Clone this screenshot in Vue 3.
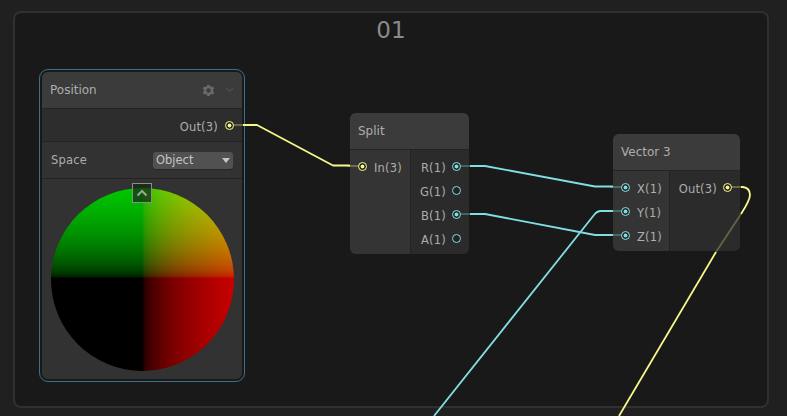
<script setup>
const gamma = (t) => Math.round(200 * Math.pow(t, 1 / 2.2))
const ts = [0, 0.02, 0.05, 0.1, 0.2, 0.35, 0.5, 0.7, 0.85, 1]
const redStops = ts.map((t) => `rgb(${gamma(t)},0,0) ${49.8 + t * 50.2}%`).join(',')
const greenStops = ts.slice().reverse().map((t) => `rgb(0,${gamma(t)},0) ${(1 - t) * 49.3}%`).join(',')
const sphereStyle = {
  backgroundImage: `linear-gradient(to right,#000 49.8%,${redStops}),linear-gradient(to bottom,${greenStops},#000 49.3%)`
}
</script>

<template>
  <div class="canvas">
    <div class="group">
      <div class="group-title">01</div>
    </div>

    <section class="node selected pos-node">
      <header class="node-head">
        <span>Position</span>
        <span class="head-tools">
          <svg width="13" height="13" viewBox="0 0 13 13">
            <path fill="#6a6a6a" fill-rule="evenodd" d="M5.200 1h2.600l.4 1.500 1.300.6 1.400-.7 1.300 2.200-1.100 1.100v1.600l1.100 1.100-1.300 2.200-1.400-.7-1.300.6-.4 1.500H5.200l-.4-1.500-1.300-.6-1.400.7L.8 8.400l1.100-1.100V5.700L.8 4.600l1.300-2.200 1.400.7 1.300-.6zM6.500 4.300a2.200 2.200 0 1 0 0 4.400 2.200 2.200 0 0 0 0-4.400z" />
          </svg>
          <svg width="9" height="6" viewBox="0 0 9 6" fill="none">
            <path d="M1 1l3.500 3.500L8 1" stroke="#4f4f4f" stroke-width="1.200" />
          </svg>
        </span>
      </header>
      <div class="out-row">
        <span class="lbl">Out(3)</span>
        <span class="port yellow filled"><i class="stub right" /></span>
      </div>
      <div class="space-row">
        <span class="lbl">Space</span>
        <div class="select"><span>Object</span><i class="caret" /></div>
      </div>
      <div class="preview">
        <div class="sphere" :style="sphereStyle"></div>
        <div class="collapse">
          <svg width="12" height="8" viewBox="0 0 12 8" fill="none">
            <path d="M1.500 6.500L6 2l4.500 4.500" stroke="#9aa89a" stroke-width="2" />
          </svg>
        </div>
      </div>
    </section>

    <section class="node split-node">
      <header class="node-head"><span>Split</span></header>
      <div class="slots">
        <div class="col inputs">
          <div class="slot in-slot">
            <span class="port yellow filled"><i class="stub left" /></span>
            <span class="lbl">In(3)</span>
          </div>
        </div>
        <div class="col outputs">
          <div class="slot out-slot"><span class="lbl">R(1)</span><span class="port cyan filled"><i class="stub right" /></span></div>
          <div class="slot out-slot"><span class="lbl">G(1)</span><span class="port cyan"></span></div>
          <div class="slot out-slot"><span class="lbl">B(1)</span><span class="port cyan filled"><i class="stub right" /></span></div>
          <div class="slot out-slot"><span class="lbl">A(1)</span><span class="port cyan"></span></div>
        </div>
      </div>
    </section>

    <section class="node vec-node">
      <header class="node-head"><span>Vector 3</span></header>
      <div class="slots">
        <div class="col inputs">
          <div class="slot in-slot"><span class="port cyan filled"><i class="stub left" /></span><span class="lbl">X(1)</span></div>
          <div class="slot in-slot"><span class="port cyan filled"><i class="stub left" /></span><span class="lbl">Y(1)</span></div>
          <div class="slot in-slot"><span class="port cyan filled"><i class="stub left" /></span><span class="lbl">Z(1)</span></div>
        </div>
        <div class="col outputs">
          <div class="slot out-slot"><span class="lbl">Out(3)</span><span class="port yellow filled"><i class="stub right" /></span></div>
        </div>
      </div>
    </section>

    <svg class="wires" width="787" height="416" viewBox="0 0 787 416" fill="none">
      <g stroke-width="1.800" stroke-linejoin="round">
        <path d="M243 125H257L333 165.500H350" stroke="#f8f88a" />
        <path d="M470 166H485L595 186.500H613" stroke="#80dfe2" />
        <path d="M470 214H485L595 235H613" stroke="#80dfe2" />
        <path d="M434 416L594 215Q597 211 601 211H613" stroke="#80dfe2" />
        <path d="M619 416L716 252" stroke="#f8f88a" />
        <path d="M741 187H743Q750 188 750 195Q750 200 741 214" stroke="#f8f88a" />
        <path d="M741 214L716 252" stroke="#f8f88a" stroke-opacity=".28" />
      </g>
    </svg>
  </div>
</template>

<style>
html, body { margin: 0; background: #202020; overflow: hidden; }
</style>

<style scoped>
.canvas {
  position: relative;
  width: 787px;
  height: 416px;
  overflow: hidden;
  background: #202020;
  font-family: "DejaVu Sans", sans-serif;
  color: #adadad;
}
.group {
  position: absolute;
  left: 13px;
  top: 11px;
  width: 756px;
  height: 397px;
  box-sizing: border-box;
  border: 2px solid #303030;
  border-radius: 8px;
  background: #191919;
  text-align: center;
}
.group-title {
  font-size: 23px;
  line-height: 30px;
  margin-top: 2px;
  color: #8a8a8a;
}
.wires { position: absolute; left: 0; top: 0; pointer-events: none; }
.node {
  position: absolute;
  box-sizing: border-box;
  border-radius: 6px;
  background: #2d2d2d;
  font-size: 11.500px;
}
.pos-node {
  left: 42px;
  top: 72px;
  width: 200px;
  height: 307px;
  display: flex;
  flex-direction: column;
  background: #323232;
  outline: 1px solid #3b6f8f;
  outline-offset: 2px;
}
.split-node { left: 350px; top: 113px; width: 119px; height: 141px; }
.vec-node { left: 613px; top: 134px; width: 127px; height: 117px; }
.node-head {
  display: flex;
  align-items: center;
  justify-content: space-between;
  box-sizing: border-box;
  height: 37px;
  padding: 0 8px;
  background: #3b3b3b;
  border-bottom: 1px solid #232323;
  border-radius: 6px 6px 0 0;
  color: #adadad;
  font-size: 12px;
}
.head-tools { display: flex; align-items: center; gap: 10px; }
.out-row {
  display: flex;
  align-items: center;
  justify-content: flex-end;
  gap: 7px;
  box-sizing: border-box;
  height: 33px;
  padding-right: 8px;
  background: #2d2d2d;
  border-bottom: 1px solid #232323;
}
.out-row .lbl { margin-top: 4px; }
.out-row .port { margin-top: 0; }
.space-row {
  display: flex;
  align-items: center;
  justify-content: space-between;
  box-sizing: border-box;
  height: 37px;
  padding: 0 9px;
  background: #323232;
  border-bottom: 1px solid #232323;
}
.select {
  display: flex;
  align-items: center;
  justify-content: space-between;
  box-sizing: border-box;
  width: 80px;
  height: 17px;
  padding: 0 3px 0 3px;
  border-radius: 3px;
  background: #515151;
  box-shadow: 0 1px 0 #262626;
  color: #c4c4c4;
}
.caret {
  width: 0;
  height: 0;
  border-left: 4px solid transparent;
  border-right: 4px solid transparent;
  border-top: 5px solid #c4c4c4;
}
.preview { position: relative; flex: 1; }
.sphere {
  position: absolute;
  left: 9px;
  top: 9px;
  width: 183px;
  height: 183px;
  border-radius: 50%;
  background-blend-mode: screen;
}
.collapse {
  position: absolute;
  left: 90px;
  top: 4px;
  width: 20px;
  height: 20px;
  box-sizing: border-box;
  display: flex;
  align-items: center;
  justify-content: center;
  border: 1px solid #8c8c8c;
  background: rgba(20, 40, 20, 0.72);
}
.slots { display: flex; height: calc(100% - 37px); }
.col { display: flex; flex-direction: column; padding-top: 6px; box-sizing: border-box; }
.inputs {
  background: #343434;
  border-radius: 0 0 0 6px;
  border-right: 1px solid #232323;
}
.split-node .inputs { width: 61px; }
.vec-node .inputs { width: 57px; }
.outputs { flex: 1; background: #2b2b2b; border-radius: 0 0 6px 0; align-items: flex-end; }
.slot { display: flex; align-items: center; height: 24px; }
.in-slot { gap: 7px; padding-left: 8px; }
.out-slot { gap: 6px; padding-right: 8px; }
.lbl { color: #adadad; white-space: nowrap; letter-spacing: 0.2px; }
.port {
  position: relative;
  flex: none;
  box-sizing: border-box;
  width: 9px;
  height: 9px;
  border-radius: 50%;
  border: 1.300px solid currentColor;
  background: #232323;
  margin-top: -4px;
}
.yellow { color: #f8f88a; }
.cyan { color: #80dfe2; }
.filled { background: radial-gradient(circle, currentColor 1.700px, #2b2b2b 2.200px); }
.stub {
  position: absolute;
  top: 2.200px;
  height: 2px;
  background: currentColor;
  opacity: 0.3;
}
.stub.right { left: 7px; width: 12px; }
.stub.left { right: 7px; width: 12px; }
</style>
